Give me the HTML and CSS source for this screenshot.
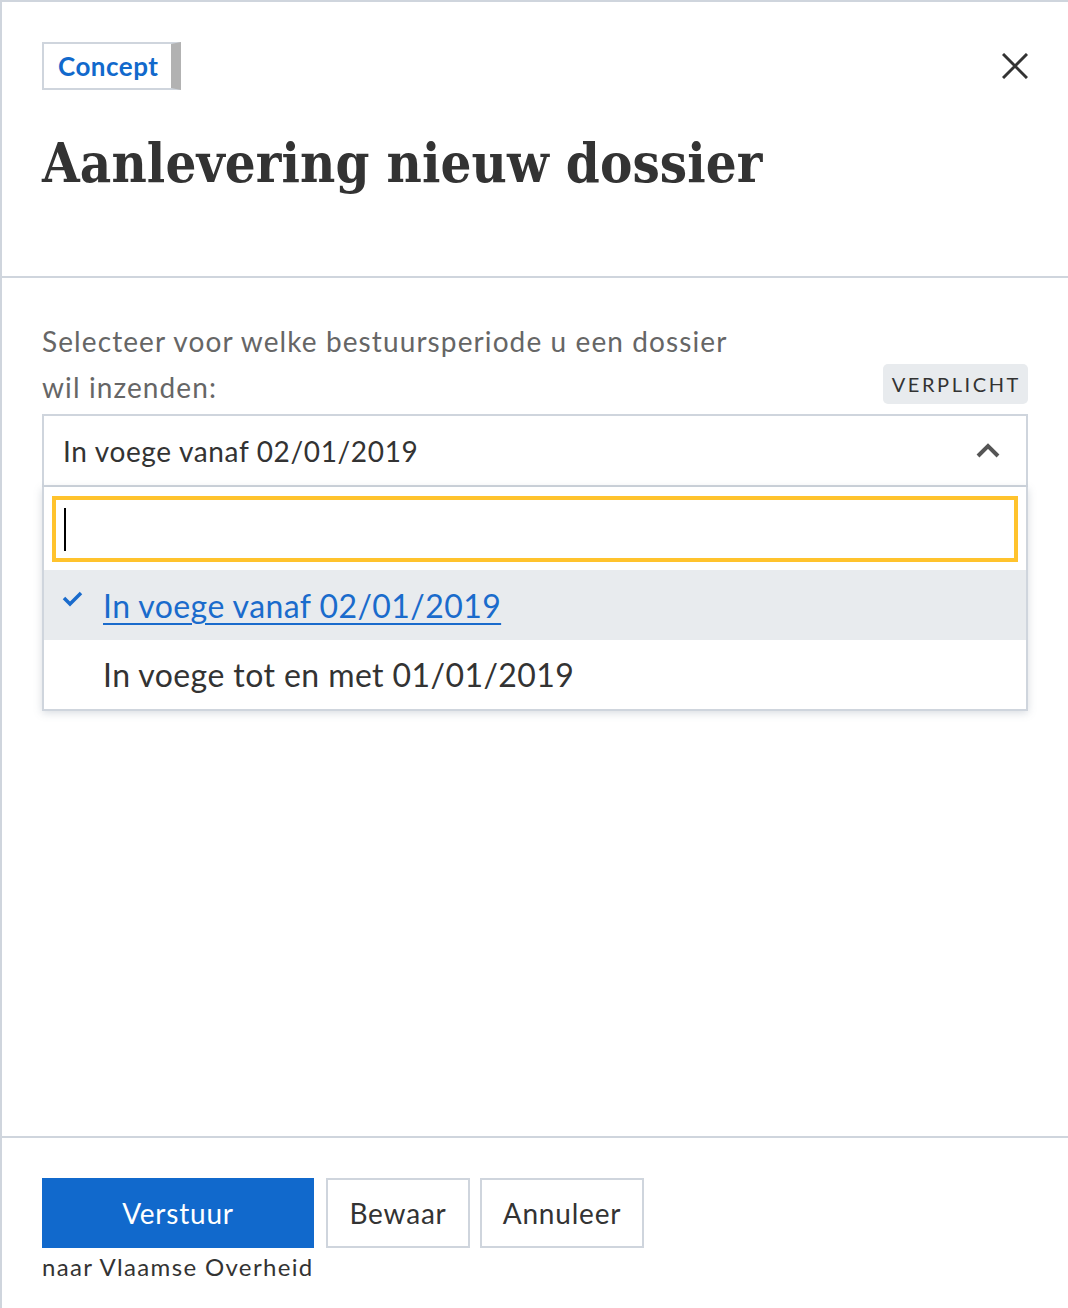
FILE: index.html
```html
<!DOCTYPE html>
<html lang="nl">
<head>
<meta charset="utf-8">
<title>Aanlevering nieuw dossier</title>
<link rel="stylesheet" href="styles.css">
</head>
<body>
<div class="modal">
  <header class="modal-header">
    <div class="header-top">
      <span class="status-badge">Concept</span>
      <button class="close" aria-label="Sluiten">
        <svg width="26" height="26" viewBox="0 0 26 26"><path d="M1 1 L25 25 M25 1 L1 25" stroke="#333" stroke-width="3" fill="none"/></svg>
      </button>
    </div>
    <h1 class="title">Aanlevering nieuw dossier</h1>
  </header>

  <main class="modal-body">
    <div class="label-row">
      <label class="label">Selecteer voor welke bestuursperiode u een dossier<br>wil inzenden:</label>
      <span class="required">VERPLICHT</span>
    </div>
    <div class="select">
      <div class="select-trigger">
        <span class="select-value">In voege vanaf 02/01/2019</span>
        <svg class="chevron" width="26" height="16" viewBox="0 0 26 16"><polyline points="2,13 12,3 22,13" stroke="#555" stroke-width="4" fill="none"/></svg>
      </div>
      <div class="dropdown">
        <div class="search"><span class="caret"></span></div>
        <ul class="options">
          <li class="option selected">
            <svg class="check" width="22" height="16" viewBox="0 0 22 16"><polyline points="2,7 8,13 19,2" stroke="#1a6bcc" stroke-width="3.5" fill="none"/></svg>
            <a class="option-link">In voege vanaf 02/01/2019</a>
          </li>
          <li class="option">In voege tot en met 01/01/2019</li>
        </ul>
      </div>
    </div>
  </main>

  <footer class="modal-footer">
    <div class="primary-group">
      <button class="btn btn-primary">Verstuur</button>
      <span class="btn-caption">naar Vlaamse Overheid</span>
    </div>
    <button class="btn btn-secondary btn-save">Bewaar</button>
    <button class="btn btn-secondary">Annuleer</button>
  </footer>
</div>
</body>
</html>
```

FILE: styles.css
```css
* { box-sizing: border-box; }
html, body { margin: 0; padding: 0; background: #fff; }
body { font-family: "Lato", "Liberation Sans", sans-serif; color: #333; }

.modal {
  height: 1308px;
  border-top: 2px solid #cfd5dd;
  border-left: 2px solid #cfd5dd;
  display: flex;
  flex-direction: column;
}

.modal-header {
  height: 276px;
  padding: 40px 40px 0 40px;
  border-bottom: 2px solid #cfd5dd;
}
.header-top {
  display: flex;
  justify-content: space-between;
  align-items: center;
}
.status-badge {
  display: inline-flex;
  align-items: center;
  height: 48px;
  padding: 0 13px 0 14px;
  border: 2px solid #cfd5dd;
  border-right: 10px solid #b2b2b2;
  color: #1169cc;
  font-size: 26px;
  font-weight: 700;
  letter-spacing: 0.5px;
}
.close {
  background: none;
  border: 0;
  padding: 0;
  width: 26px;
  height: 26px;
  display: flex;
}
.title {
  margin: 42px 0 0 0;
  font-family: "DejaVu Serif", serif;
  font-stretch: condensed;
  font-weight: 700;
  font-size: 54px;
  line-height: 63px;
  color: #333;
  letter-spacing: 0.1px;
}

.modal-body {
  flex: 1;
  padding: 40px 40px 0 40px;
  border-bottom: 2px solid #cfd5dd;
}
.label-row {
  display: flex;
  justify-content: space-between;
  align-items: flex-end;
  margin-bottom: 4px;
}
.label {
  font-size: 28px;
  line-height: 46px;
  color: #666;
  letter-spacing: 1.1px;
}
.required {
  background: #e8ebee;
  border-radius: 5px;
  height: 40px;
  padding: 0 7px 0 9px;
  display: flex;
  align-items: center;
  font-size: 20px;
  letter-spacing: 2.6px;
  color: #333;
  margin-bottom: 6px;
}

.select { position: relative; }
.select-trigger {
  height: 73px;
  border: 2px solid #cfd5dd;
  display: flex;
  align-items: center;
  justify-content: space-between;
  padding: 0 24px 0 19px;
}
.select-value { font-size: 28px; color: #333; letter-spacing: 0.65px; }
.chevron { display: block; }

.dropdown {
  border: 2px solid #cfd5dd;
  border-top: 0;
  padding-top: 9px;
  box-shadow: 0 2px 8px rgba(100, 115, 135, 0.25);
}
.search {
  height: 66px;
  margin: 0 8px;
  border: 4px solid #ffc32d;
  padding: 8px 8px;
  display: flex;
  align-items: center;
}
.caret {
  width: 2px;
  height: 43px;
  background: #000;
}
.options {
  list-style: none;
  margin: 8px 0 0 0;
  padding: 0;
}
.option {
  height: 70px;
  display: flex;
  align-items: center;
  padding-left: 59px;
  font-size: 32px;
  color: #333;
  letter-spacing: 0.42px;
  position: relative;
}
.option:last-child { height: 69px; }
.option.selected { background: #e8ebee; }
.check {
  position: absolute;
  left: 18px;
  top: 21px;
}
.option-link {
  color: #1a6bcc;
  text-decoration: underline;
  text-decoration-thickness: 2px;
  text-underline-offset: 5px;
}

.modal-footer {
  height: 170px;
  padding: 40px 40px 0 40px;
  display: flex;
  align-items: flex-start;
}
.primary-group {
  display: flex;
  flex-direction: column;
  margin-right: 12px;
}
.btn {
  height: 70px;
  font-family: "Lato", "Liberation Sans", sans-serif;
  font-size: 28px;
  padding: 0 16px;
  letter-spacing: 0.8px;
  cursor: pointer;
}
.btn-primary {
  background: #1169cc;
  color: #fff;
  border: 0;
  width: 272px;
}
.btn-secondary {
  background: #fff;
  color: #333;
  border: 2px solid #cfd5dd;
}
.btn-save { width: 144px; margin-right: 10px; }
.btn-secondary:last-child { width: 164px; }
.btn-caption {
  font-size: 24px;
  line-height: 38px;
  color: #333;
  letter-spacing: 1.35px;
}
```
